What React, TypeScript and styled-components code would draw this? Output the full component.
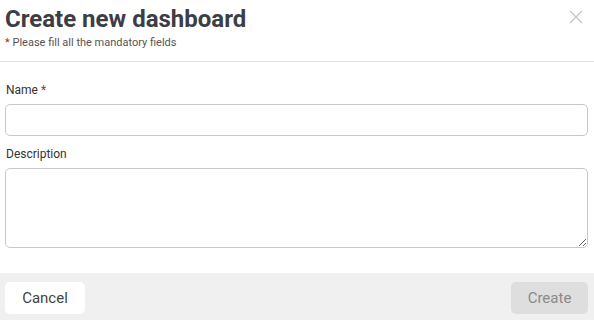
import * as React from 'react'
import styled, { createGlobalStyle } from 'styled-components'

const GlobalStyle = createGlobalStyle`
  body {
    margin: 0;
    background: #ffffff;
    font-family: Roboto, 'Liberation Sans', sans-serif;
  }
`

const Dialog = styled.div`
  width: 594px;
  height: 320px;
  display: flex;
  flex-direction: column;
  background: #ffffff;
  overflow: hidden;
`

const Header = styled.div`
  position: relative;
  padding: 5px 6px 0 5px;
  height: 62px;
  box-sizing: border-box;
  border-bottom: 1px solid #e2e2e2;
`

const Title = styled.h1`
  margin: 0;
  font-size: 24px;
  line-height: 28px;
  font-weight: 700;
  color: #3d3d45;
`

const Subtitle = styled.div`
  margin-top: 3px;
  font-size: 11px;
  line-height: 14px;
  color: #555;
`

const Star = styled.span`
  color: #a0303e;
`

const CloseButton = styled.button`
  position: absolute;
  top: 9px;
  right: 10px;
  width: 16px;
  height: 16px;
  padding: 0;
  border: none;
  background: none;
  cursor: pointer;
  display: flex;
  align-items: center;
  justify-content: center;
`

const Body = styled.div`
  flex: 1;
  display: flex;
  flex-direction: column;
  padding: 21px 6px 0 5px;
`

const Field = styled.div`
  display: flex;
  flex-direction: column;
  margin-bottom: 11px;
`

const Label = styled.label`
  font-size: 12px;
  line-height: 14px;
  color: #333;
  margin-bottom: 7px;
  padding-left: 1px;
`

const Input = styled.input`
  height: 32px;
  box-sizing: border-box;
  border: 1px solid #c8c8c8;
  border-radius: 5px;
  padding: 0 8px;
  font: inherit;
  outline: none;
`

const TextArea = styled.textarea`
  height: 80px;
  box-sizing: border-box;
  border: 1px solid #c8c8c8;
  border-radius: 5px;
  padding: 6px 8px;
  font: inherit;
  outline: none;
`

const Footer = styled.div`
  height: 47px;
  box-sizing: border-box;
  background: #f0f0f0;
  display: flex;
  align-items: flex-start;
  justify-content: space-between;
  padding: 9px 6px 0 5px;
`

const Button = styled.button<{ $primary?: boolean }>`
  height: 32px;
  border: none;
  border-radius: 5px;
  font-family: Roboto, 'Liberation Sans', sans-serif;
  font-size: 15px;
  padding: 0;
  width: ${({ $primary }) => ($primary ? '77px' : '80px')};
  background: ${({ $primary }) => ($primary ? '#dedede' : '#ffffff')};
  color: ${({ $primary }) => ($primary ? '#8a8a8a' : '#444')};
  cursor: pointer;
`

export default function App() {
  return (
    <>
      <GlobalStyle />
      <Dialog>
        <Header>
          <Title>Create new dashboard</Title>
          <Subtitle>
            <Star>*</Star> Please fill all the mandatory fields
          </Subtitle>
          <CloseButton aria-label="Close">
            <svg width="14" height="14" viewBox="0 0 14 14">
              <path d="M1 1L13 13M13 1L1 13" stroke="#c4c4c4" strokeWidth="1.2" />
            </svg>
          </CloseButton>
        </Header>
        <Body>
          <Field>
            <Label>
              Name <Star>*</Star>
            </Label>
            <Input />
          </Field>
          <Field>
            <Label>Description</Label>
            <TextArea />
          </Field>
        </Body>
        <Footer>
          <Button>Cancel</Button>
          <Button $primary disabled>
            Create
          </Button>
        </Footer>
      </Dialog>
    </>
  )
}
